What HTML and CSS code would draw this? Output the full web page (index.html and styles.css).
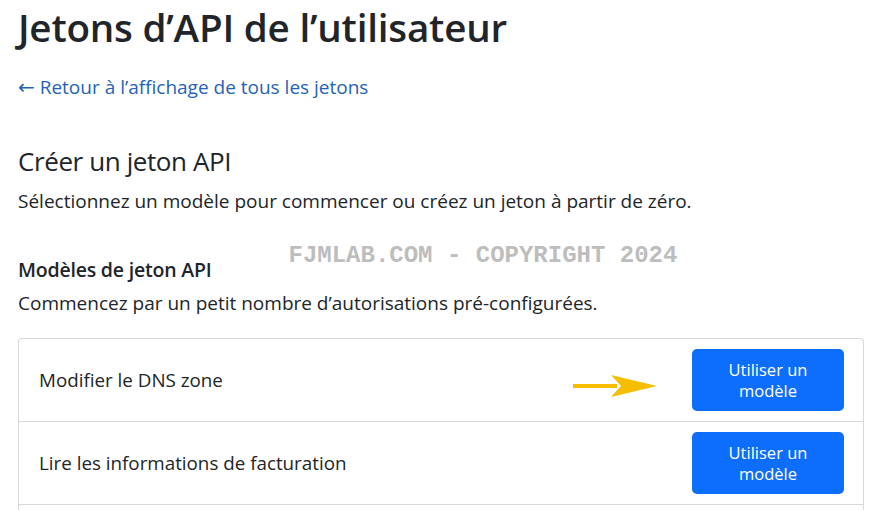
FILE: index.html
```html
<!DOCTYPE html>
<html lang="fr">
  <head>
    <meta charset="UTF-8" />
    <title>Jetons d’API de l’utilisateur</title>
    <link rel="stylesheet" href="styles.css">
  </head>
  <body>
    <div class="page">
      <h1 class="title">Jetons d’API de l’utilisateur</h1>

      <a class="back" href="#"><span class="arrow">&larr;</span> Retour à l’affichage de tous les jetons</a>

      <h2 class="section">Créer un jeton API</h2>
      <p class="lead">Sélectionnez un modèle pour commencer ou créez un jeton à partir de zéro.</p>

      <div class="templates-head">
        <h3 class="sub">Modèles de jeton API</h3>
        <span class="mark">FJMLAB.COM - COPYRIGHT 2024</span>
      </div>
      <p class="lead lead-tight">Commencez par un petit nombre d’autorisations pré-configurées.</p>

      <ul class="list">
        <li class="row">
          <span>Modifier le DNS zone</span>
          <div class="actions">
            <svg class="pointer" width="84" height="24" viewBox="0 0 84 24">
              <rect x="0" y="10" width="44" height="4" fill="#f7bd00" />
              <polygon points="38,1 84,12 38,23 48,12" fill="#f7bd00" />
            </svg>
            <button class="btn">Utiliser un<br>modèle</button>
          </div>
        </li>
        <li class="row">
          <span>Lire les informations de facturation</span>
          <div class="actions">
            <button class="btn">Utiliser un<br>modèle</button>
          </div>
        </li>
        <li class="row"></li>
      </ul>
    </div>
  </body>
</html>
```

FILE: styles.css
```css
body {
  margin: 0;
  background: #fff;
  color: #212529;
  font-family: "Open Sans", "Noto Sans", sans-serif;
}

.page {
  padding: 0 22px 0 18px;
}

.title {
  margin: 0;
  font-size: 38.6px;
  font-weight: 600;
  line-height: 54px;
  letter-spacing: -0.2px;
}

.back {
  display: block;
  margin-top: 19px;
  color: #2563b8;
  text-decoration: none;
  font-size: 19px;
  line-height: 28px;
}

.arrow {
  font-family: "DejaVu Sans", sans-serif;
  font-size: 20px;
}

.section {
  margin: 43px 0 0;
  font-size: 26px;
  font-weight: 500;
  line-height: 34px;
  letter-spacing: -0.4px;
}

.lead {
  margin: 10px 0 0;
  font-size: 19px;
  line-height: 26px;
}

.lead-tight {
  margin-top: 8px;
}

.templates-head {
  display: flex;
  align-items: flex-start;
  margin-top: 30px;
}

.sub {
  margin: 14px 0 0;
  font-size: 19.5px;
  font-weight: 600;
  line-height: 24px;
  letter-spacing: -0.2px;
}

.mark {
  margin-left: 77px;
  font-family: "Liberation Mono", monospace;
  font-weight: bold;
  font-size: 24px;
  line-height: 24px;
  color: #bdbdbd;
}

.list {
  margin: 22px 0 0;
  padding: 0;
  list-style: none;
  border: 1px solid #d6d8db;
  border-bottom: none;
  border-radius: 4px 4px 0 0;
}

.row {
  display: flex;
  align-items: center;
  justify-content: space-between;
  height: 82px;
  padding: 0 19px 0 20px;
  border-bottom: 1px solid #d6d8db;
  font-size: 18.8px;
}

.actions {
  display: flex;
  align-items: center;
  gap: 35px;
}

.pointer {
  margin-top: 12px;
}

.btn {
  width: 152px;
  height: 62px;
  border: none;
  border-radius: 5px;
  background: #0d6efd;
  color: #fff;
  font-family: "Open Sans", sans-serif;
  font-size: 16.5px;
  line-height: 21px;
}
```
